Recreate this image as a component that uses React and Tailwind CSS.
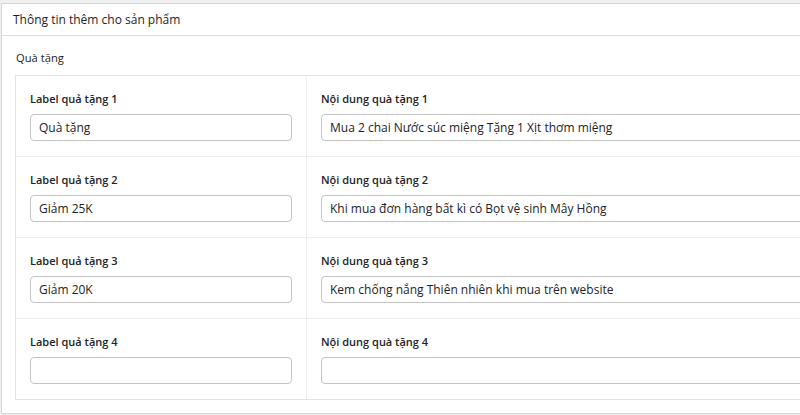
import React from "react";

const rows = [
  { n: 1, label: "Quà tặng", content: "Mua 2 chai Nước súc miệng Tặng 1 Xịt thơm miệng" },
  { n: 2, label: "Giảm 25K", content: "Khi mua đơn hàng bất kì có Bọt vệ sinh Mây Hồng" },
  { n: 3, label: "Giảm 20K", content: "Kem chống nắng Thiên nhiên khi mua trên website" },
  { n: 4, label: "", content: "" },
];

function Field({ title, value }) {
  return (
    <div className="flex flex-col">
      <div className="h-[16px] text-[11px] leading-[16px] font-semibold text-[#1d2327] whitespace-nowrap">{title}</div>
      <div className="mt-[7px] h-[27px] rounded-[4px] border border-[#c4c4c4] bg-white pl-[8px] text-[12px] leading-[25px] text-[#1d2327] whitespace-nowrap overflow-hidden">
        {value}
      </div>
    </div>
  );
}

export default function App() {
  return (
    <div
      className="w-[800px] h-[415px] overflow-hidden bg-[#f0f0f1] pt-[3px]"
      style={{ fontFamily: '"Open Sans", "Noto Sans", sans-serif' }}
    >
      <div className="ml-[1px] w-[1000px] h-[411px] border border-[#d6d6d6] bg-white">
        <div className="h-[32px] border-b border-[#dcdcdc] pl-[11px] text-[12px] leading-[32px] font-medium text-[#1d2327]">
          Thông tin thêm cho sản phẩm
        </div>
        <div className="pl-[13px] pt-[14px]">
          <div className="h-[16px] pl-[1px] text-[11.2px] leading-[16px] text-[#1d2327]">Quà tặng</div>
          <div className="mt-[9px] border border-[#e3e3e3] w-[900px]">
            {rows.map((r, i) => (
              <div key={r.n} className={"flex " + (i > 0 ? "border-t border-[#efefef]" : "")}>
                <div className="w-[291px] shrink-0 pl-[14px] pr-[14px] pt-[15px] pb-[15px] border-r border-[#efefef]">
                  <Field title={`Label quả tặng ${r.n}`} value={r.label} />
                </div>
                <div className="flex-1 pl-[14px] pt-[15px] pb-[15px]">
                  <Field title={`Nội dung quà tặng ${r.n}`} value={r.content} />
                </div>
              </div>
            ))}
          </div>
        </div>
      </div>
    </div>
  );
}
